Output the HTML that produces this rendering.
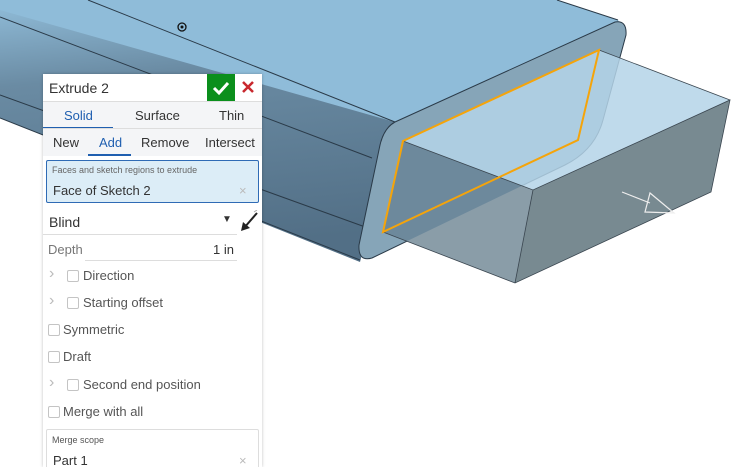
<!DOCTYPE html>
<html><head><style>
html,body{margin:0;width:739px;height:467px;overflow:hidden;background:#fff;font-family:"Liberation Sans",sans-serif;position:relative}
svg{position:absolute;left:0;top:0}
.p{position:absolute;left:43px;top:74px;width:219px;height:393px;overflow:hidden;background:#fff;box-shadow:0 0 3px rgba(0,0,0,.25);font-size:13px;color:#333}
.a{position:absolute}
.cb{position:absolute;width:10px;height:10px;border:1px solid #c4c4c4;border-radius:2px;background:#fff}
.chev{position:absolute;color:#bbb;font-size:16px}
.lbl{position:absolute;color:#555;font-size:13px}
</style></head><body>
<svg width="739" height="467" viewBox="0 0 739 467">
<defs>
<linearGradient id="g1" x1="0" y1="0" x2="0.15" y2="1">
<stop offset="0" stop-color="#8db8d4"/><stop offset="0.3" stop-color="#6a8ba3"/><stop offset="1" stop-color="#526f86"/>
</linearGradient>
<clipPath id="ef"><path d="M395,122 L615,22 Q627,20 626,35 L603,120 Q595,150 565,165 L372,258 Q358,262 359,245 L380,145 Q384,128 395,122 Z"/></clipPath>
</defs>
<polygon points="0,0 557,0 618,20 625,30 395,122 0,15" fill="#8fbcd9"/>
<polygon points="0,10 395,122 360,262 0,118" fill="url(#g1)"/>
<line x1="88" y1="0" x2="395" y2="122" stroke="#2a3a48" stroke-width="1"/>
<line x1="0" y1="17" x2="372" y2="158" stroke="#2a3a48" stroke-width="1"/>
<line x1="0" y1="95" x2="368" y2="228" stroke="#2a3a48" stroke-width="1"/>
<line x1="0" y1="118" x2="360" y2="260" stroke="#2a3a48" stroke-width="1"/>
<line x1="557" y1="0" x2="618" y2="20" stroke="#2a3a48" stroke-width="1"/>
<path d="M395,122 L615,22 Q627,20 626,35 L603,120 Q595,150 565,165 L372,258 Q358,262 359,245 L380,145 Q384,128 395,122 Z" fill="#86a5b8" stroke="#2a3a48" stroke-width="1"/>
<polygon points="403,141 599,50 730,100 533,190" fill="#b4d4e7" opacity="0.85"/>
<polygon points="533,190 730,100 711,192 515,283" fill="#788a91"/>
<polygon points="403,141 533,190 515,283 383,232" fill="#8a9da8"/>
<polygon points="403,141 533,190 515,283 383,232" fill="#6d899c" clip-path="url(#ef)"/>
<g stroke="#3a4650" stroke-width="0.8" fill="none">
<polyline points="403,141 533,190 730,100 711,192 515,283 383,232"/>
<line x1="533" y1="190" x2="515" y2="283"/>
<line x1="599" y1="50" x2="730" y2="100"/>
</g>
<polygon points="403,141 599,50 578,140 383,232" fill="none" stroke="#f5a40a" stroke-width="2"/>
<g stroke="#eee" stroke-width="1.2" fill="none">
<line x1="622" y1="192" x2="650" y2="203"/>
<polygon points="645,212 650,193 674,213"/>
</g>
<circle cx="182" cy="27" r="4" fill="none" stroke="#111" stroke-width="1.3"/><circle cx="182" cy="27" r="1.5" fill="#111"/>
</svg>
<div class="p">
<div class="a" style="left:6px;top:6px;font-size:14px;color:#333">Extrude 2</div>
<div class="a" style="left:164px;top:0;width:28px;height:27px;background:#0b8f1c"><svg width="28" height="27"><path d="M7,14 L12,19 L21,9" stroke="#fff" stroke-width="3" fill="none"/></svg></div>
<div class="a" style="left:198px;top:6px;"><svg width="14" height="14"><path d="M2,2 L12,12 M12,2 L2,12" stroke="#c8282e" stroke-width="2.5"/></svg></div>
<div class="a" style="left:0;top:27px;width:219px;height:54px;background:#f4f5f7;border-top:1px solid #ddd"></div>
<div class="a" style="left:21px;top:34px;color:#1f5fb0">Solid</div>
<div class="a" style="left:92px;top:34px">Surface</div>
<div class="a" style="left:176px;top:34px">Thin</div>
<div class="a" style="left:0;top:53px;width:70px;height:2px;background:#1f5fb0"></div>
<div class="a" style="left:0;top:54px;width:219px;height:1px;background:#ddd"></div>
<div class="a" style="left:10px;top:61px">New</div>
<div class="a" style="left:56px;top:61px;color:#1f5fb0">Add</div>
<div class="a" style="left:98px;top:61px">Remove</div>
<div class="a" style="left:162px;top:61px">Intersect</div>
<div class="a" style="left:45px;top:80px;width:43px;height:2px;background:#1f5fb0"></div>
<div class="a" style="left:3px;top:86px;width:211px;height:41px;background:#dcedf7;border:1px solid #2f6bb5;border-radius:2px"></div>
<div class="a" style="left:9px;top:91px;font-size:9px;color:#666">Faces and sketch regions to extrude</div>
<div class="a" style="left:10px;top:109px">Face of Sketch 2</div>
<div class="a" style="left:196px;top:109px;color:#bbb">×</div>
<div class="a" style="left:6px;top:140px;font-size:14px">Blind</div>
<div class="a" style="left:179px;top:140px;font-size:10px">▼</div>
<div class="a" style="left:196px;top:136px"><svg width="22" height="24"><path d="M18,3 L5,18" stroke="#222" stroke-width="2"/><path d="M2,21 L4,12 L11,18 Z" fill="#222"/><path d="M15,2 L18,0" stroke="#aaa"/></svg></div>
<div class="a" style="left:0;top:160px;width:194px;height:1px;background:#ddd"></div>
<div class="lbl" style="left:5px;top:168px;color:#777">Depth</div>
<div class="a" style="left:170px;top:168px">1 in</div>
<div class="a" style="left:42px;top:186px;width:152px;height:1px;background:#ddd"></div>
<div class="chev" style="left:6px;top:191px">›</div><div class="cb" style="left:24px;top:196px"></div><div class="lbl" style="left:40px;top:194px">Direction</div>
<div class="chev" style="left:6px;top:218px">›</div><div class="cb" style="left:24px;top:223px"></div><div class="lbl" style="left:40px;top:221px">Starting offset</div>
<div class="cb" style="left:5px;top:250px"></div><div class="lbl" style="left:20px;top:248px">Symmetric</div>
<div class="cb" style="left:5px;top:277px"></div><div class="lbl" style="left:20px;top:275px">Draft</div>
<div class="chev" style="left:6px;top:300px">›</div><div class="cb" style="left:24px;top:305px"></div><div class="lbl" style="left:40px;top:303px">Second end position</div>
<div class="cb" style="left:5px;top:332px"></div><div class="lbl" style="left:20px;top:330px">Merge with all</div>
<div class="a" style="left:3px;top:355px;width:211px;height:50px;border:1px solid #ddd;border-radius:2px"></div>
<div class="a" style="left:9px;top:361px;font-size:9px;color:#555">Merge scope</div>
<div class="a" style="left:10px;top:379px">Part 1</div>
<div class="a" style="left:196px;top:379px;color:#bbb">×</div>
</div>
</body></html>
